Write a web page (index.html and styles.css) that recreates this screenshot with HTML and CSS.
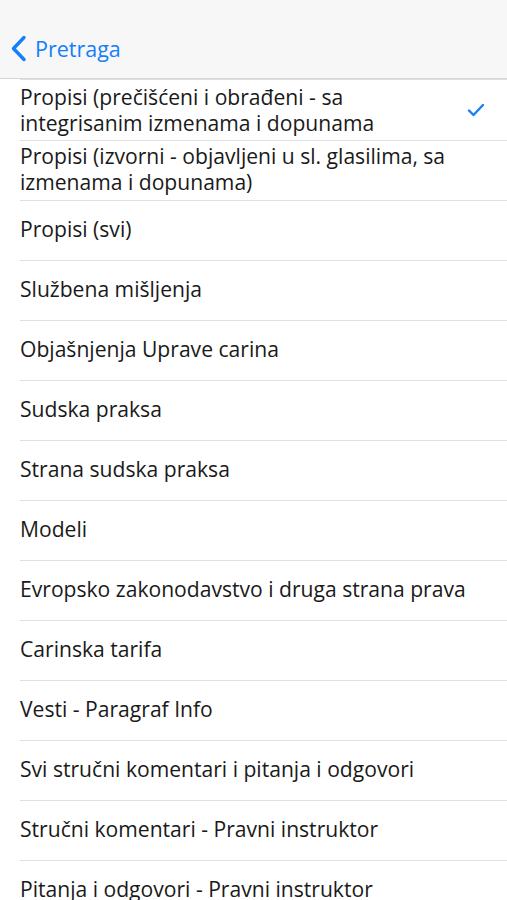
FILE: index.html
```html
<!DOCTYPE html>
<html lang="sr">
<head>
    <meta charset="UTF-8">
    <meta name="viewport" content="width=device-width, initial-scale=1.0">
    <title>Pretraga</title>
    <link rel="stylesheet" href="styles.css">
</head>
<body>
    <header class="nav-bar">
        <a class="back-link" href="#">
            <svg class="back-icon" width="17" height="27" viewBox="0 0 17 27">
                <path d="M14 2.5 L3.5 13.5 L14 24.5" fill="none" stroke="#147efb" stroke-width="3.4" stroke-linecap="round" stroke-linejoin="round"/>
            </svg>
            <span>Pretraga</span>
        </a>
    </header>

    <ul class="option-list">
        <li class="option option-first selected">
            <span class="option-label">Propisi (prečišćeni i obrađeni - sa integrisanim izmenama i dopunama</span>
            <svg class="check-icon" width="18" height="16" viewBox="0 0 18 16">
                <path d="M2 8.5 L6.5 13 L16 3" fill="none" stroke="#147efb" stroke-width="2.4" stroke-linecap="round" stroke-linejoin="round"/>
            </svg>
        </li>
        <li class="option">
            <span class="option-label">Propisi (izvorni - objavljeni u sl. glasilima, sa izmenama i dopunama)</span>
        </li>
        <li class="option"><span class="option-label">Propisi (svi)</span></li>
        <li class="option"><span class="option-label">Službena mišljenja</span></li>
        <li class="option"><span class="option-label">Objašnjenja Uprave carina</span></li>
        <li class="option"><span class="option-label">Sudska praksa</span></li>
        <li class="option"><span class="option-label">Strana sudska praksa</span></li>
        <li class="option"><span class="option-label">Modeli</span></li>
        <li class="option"><span class="option-label">Evropsko zakonodavstvo i druga strana prava</span></li>
        <li class="option"><span class="option-label">Carinska tarifa</span></li>
        <li class="option"><span class="option-label">Vesti - Paragraf Info</span></li>
        <li class="option"><span class="option-label">Svi stručni komentari i pitanja i odgovori</span></li>
        <li class="option"><span class="option-label">Stručni komentari - Pravni instruktor</span></li>
        <li class="option"><span class="option-label">Pitanja i odgovori - Pravni instruktor</span></li>
    </ul>
</body>
</html>
```

FILE: styles.css
```css
:root {
    --ios-blue: #147efb;
    --nav-bg: #f7f7f7;
    --separator: #e0e0e0;
    --text-dark: #1a1a1a;
}

* {
    margin: 0;
    padding: 0;
    box-sizing: border-box;
}

body {
    font-family: "Open Sans", "Noto Sans", "Liberation Sans", sans-serif;
    background: #fff;
    color: var(--text-dark);
    overflow: hidden;
}

.nav-bar {
    height: 79px;
    background: var(--nav-bg);
    border-bottom: 1px solid #d6d6d6;
    display: flex;
    align-items: flex-end;
    padding: 0 0 15px 10px;
}

.back-link {
    display: flex;
    align-items: center;
    gap: 8px;
    color: var(--ios-blue);
    text-decoration: none;
    font-size: 21.5px;
}

.back-icon {
    display: block;
}

.option-list {
    list-style: none;
    margin-left: 20px;
}

.option {
    height: 60px;
    display: flex;
    align-items: center;
    justify-content: space-between;
    border-bottom: 1px solid var(--separator);
    padding: 0 22px 3px 0;
    font-size: 21.1px;
    line-height: 26px;
}

.option-first {
    height: 62px;
    border-top: 1px solid var(--separator);
    padding-bottom: 1px;
}

.option-label {
    max-width: 465px;
}

.option-first .option-label {
    max-width: 400px;
}

.check-icon {
    flex-shrink: 0;
    display: block;
}
```
